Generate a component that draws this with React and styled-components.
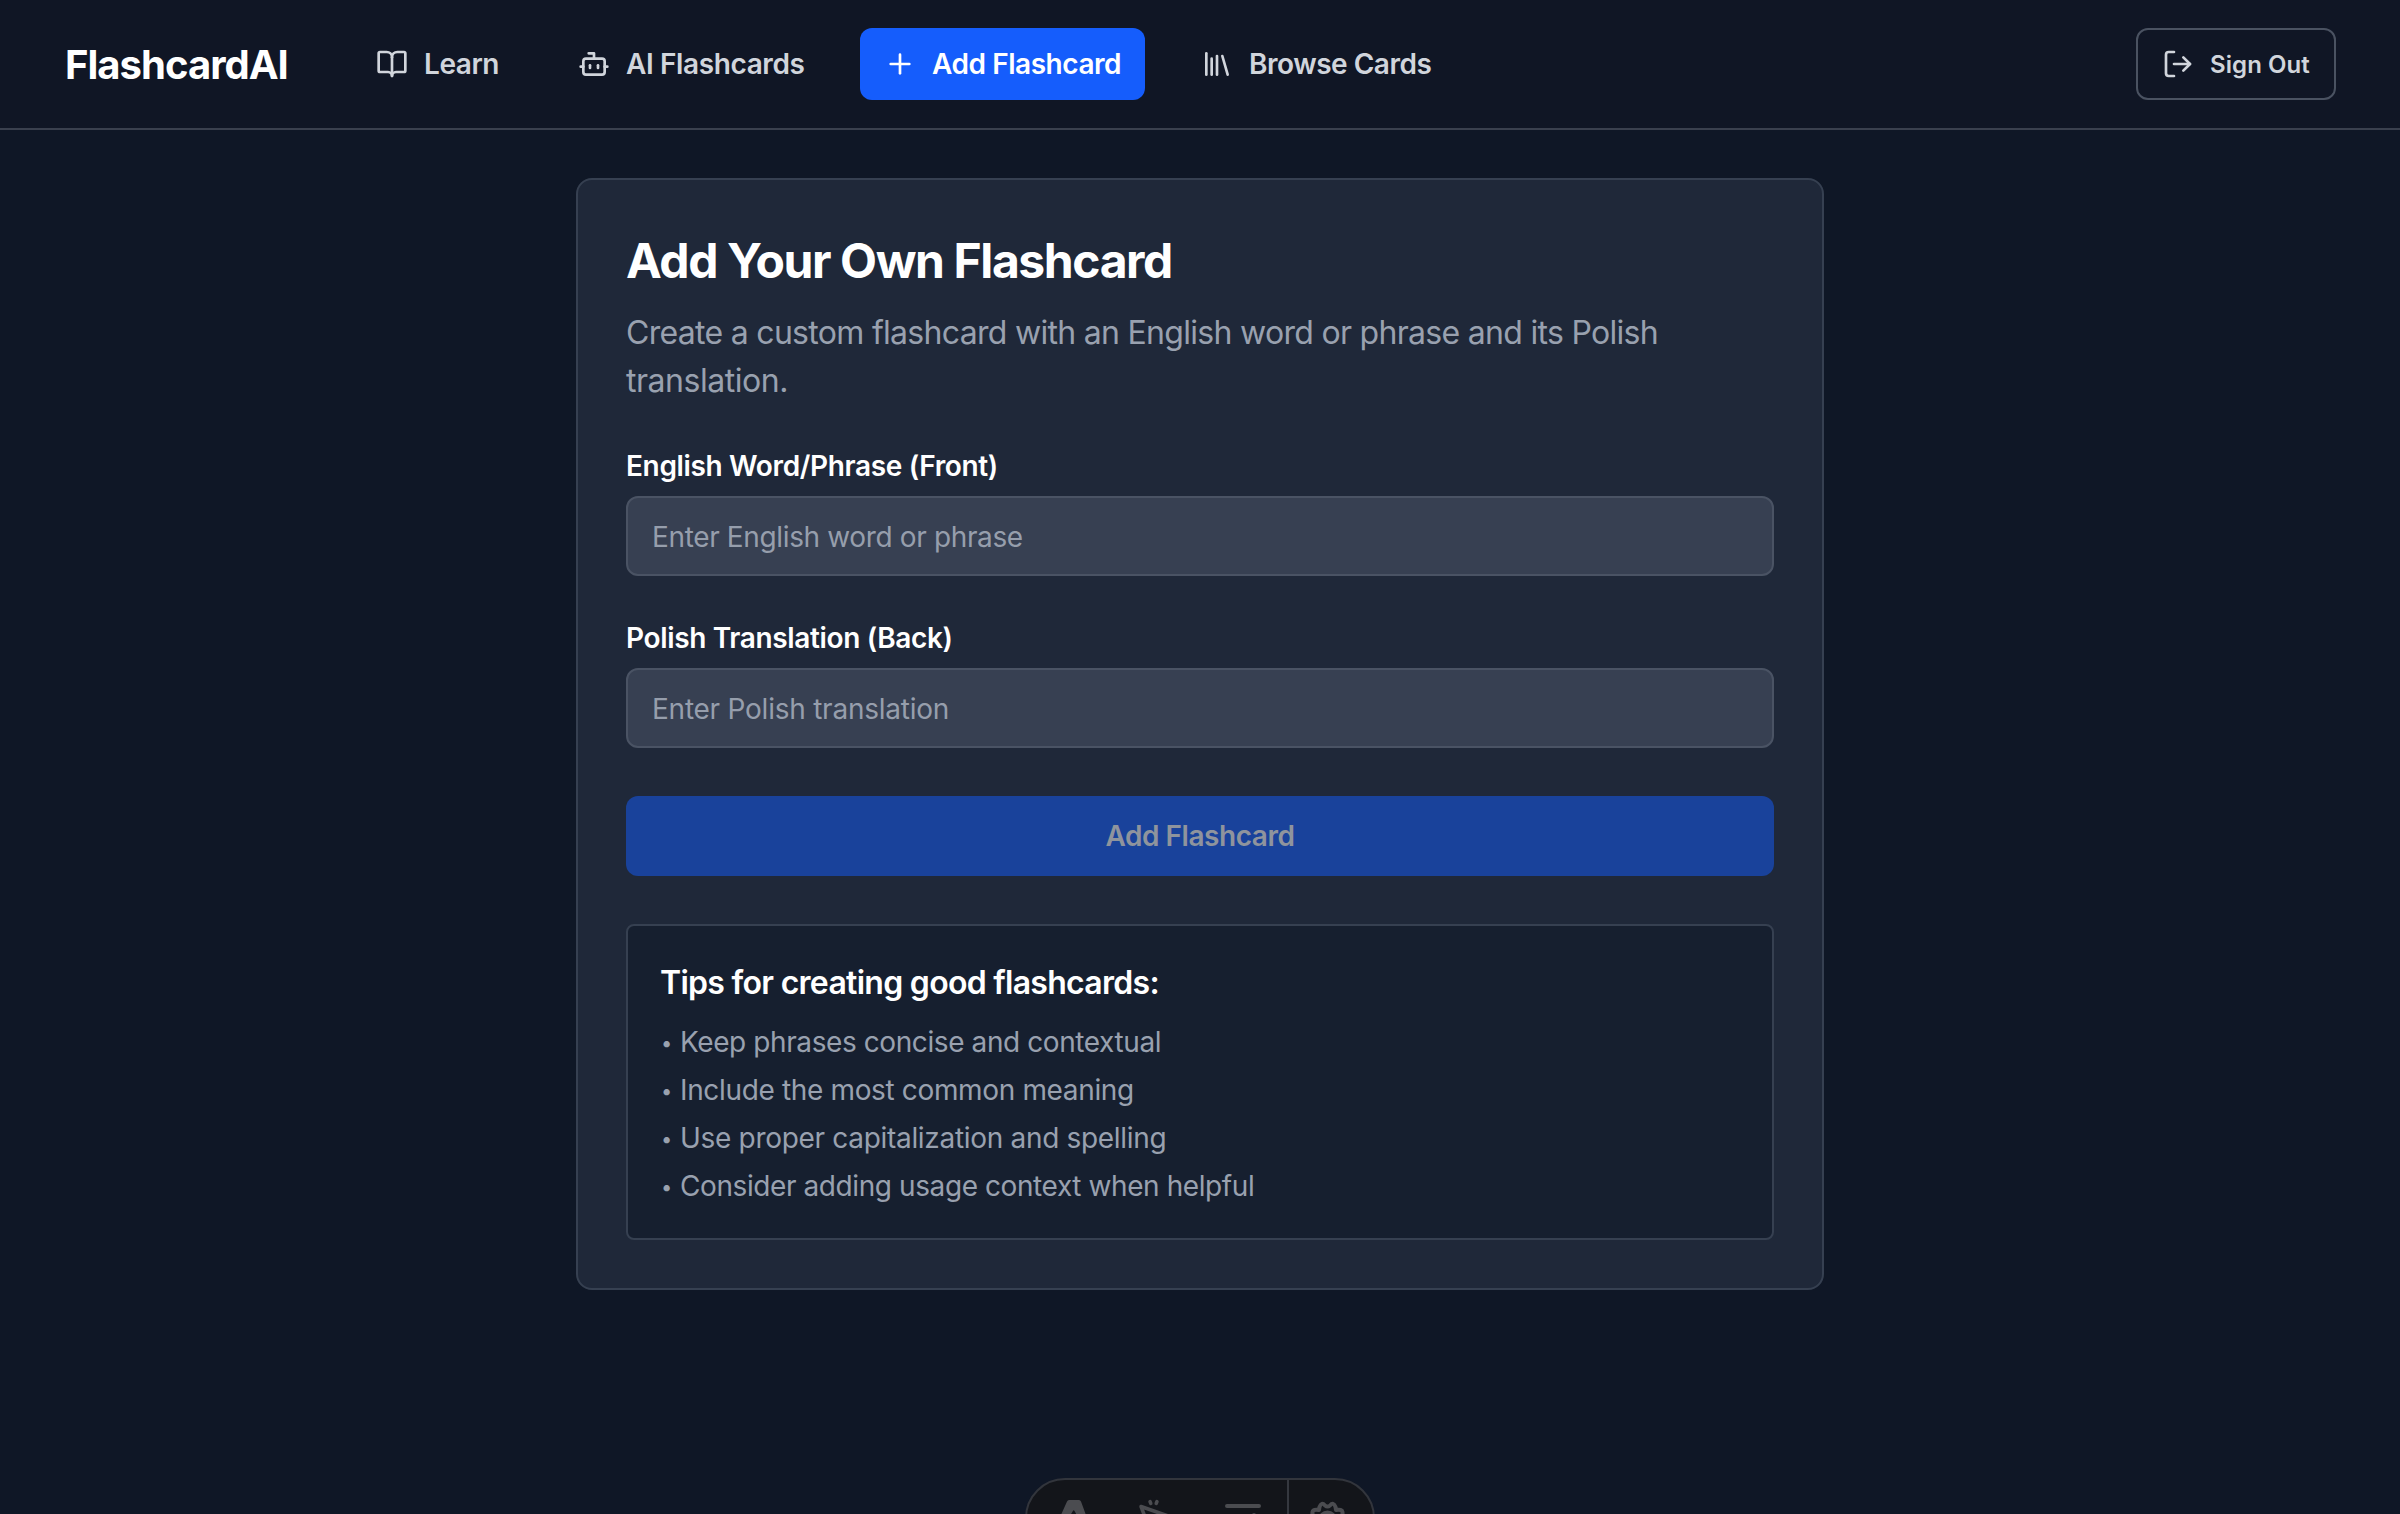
import React from "react";
import styled, { createGlobalStyle } from "styled-components";
import { BookOpen, Bot, Plus, Library, LogOut } from "lucide-react";

const GlobalStyle = createGlobalStyle`
  * { box-sizing: border-box; }
  body {
    margin: 0;
    overflow: hidden;
    background: #0f1726;
    color: #fff;
    font-family: Inter, "Liberation Sans", sans-serif;
  }
  h1, h2, p, ul { margin: 0; padding: 0; }
`;

const Page = styled.div`
  min-height: 100vh;
  display: flex;
  flex-direction: column;
`;

const Header = styled.header`
  display: flex;
  align-items: center;
  justify-content: space-between;
  height: 130px;
  padding: 0 64px;
  background: #101625;
  border-bottom: 2px solid #3a404e;
`;

const HeaderStart = styled.div`
  display: flex;
  align-items: center;
`;

const Logo = styled.div`
  width: 288px;
  padding: 1px 0 0 1px;
  font-size: 40px;
  line-height: 56px;
  font-weight: 700;
  letter-spacing: -0.98px;
  white-space: nowrap;
`;

const Nav = styled.nav`
  display: flex;
  gap: 32px;
`;

const NavLink = styled.a`
  display: flex;
  align-items: center;
  gap: 16px;
  width: ${(p) => p.$width}px;
  height: 72px;
  padding: 0 24px;
  border-radius: 12px;
  font-size: 28px;
  font-weight: 600;
  letter-spacing: ${(p) => p.$tracking}px;
  white-space: nowrap;
  color: ${(p) => (p.$active ? "#fff" : "#d1d5dc")};
  background: ${(p) => (p.$active ? "#155dfc" : "transparent")};
  svg { flex: none; }
`;

const SignOut = styled.button`
  display: flex;
  align-items: center;
  gap: 16px;
  width: 200px;
  height: 72px;
  padding: 0 24px;
  border: 2px solid #4a5261;
  border-radius: 12px;
  background: transparent;
  color: #d1d5dc;
  font: 600 24px Inter, sans-serif;
  letter-spacing: 0.08px;
  white-space: nowrap;
  svg { flex: none; }
`;

const Main = styled.main`
  display: flex;
  justify-content: center;
  padding-top: 48px;
`;

const Card = styled.section`
  width: 1248px;
  padding: 48px;
  border: 2px solid #364051;
  border-radius: 16px;
  background: #1f2839;
`;

const Title = styled.h1`
  padding-top: 1px;
  font-size: 48px;
  line-height: 63px;
  font-weight: 700;
  letter-spacing: -1.4px;
`;

const Description = styled.p`
  margin-top: 17px;
  font-size: 32px;
  line-height: 48px;
  color: #99a1af;
`;

const Line = styled.span`
  display: block;
  white-space: nowrap;
  letter-spacing: ${(p) => p.$tracking}px;
`;

const Form = styled.form`
  display: flex;
  flex-direction: column;
  gap: 48px;
  margin-top: 47px;
`;

const Field = styled.div`
  display: flex;
  flex-direction: column;
  gap: 16px;
`;

const Label = styled.label`
  font-size: 28px;
  line-height: 28px;
  font-weight: 600;
  letter-spacing: -0.35px;
`;

const Input = styled.input`
  height: 80px;
  padding: 2px 24px 0;
  border: 2px solid #4a5364;
  border-radius: 12px;
  background: #374052;
  color: #fff;
  font: 400 28px Inter, sans-serif;
  letter-spacing: ${(p) => p.$tracking}px;
  outline: none;
  &::placeholder { color: #969eac; opacity: 1; }
`;

const Submit = styled.button`
  height: 80px;
  border: 0;
  border-radius: 12px;
  background: #19429b;
  color: #8f949d;
  font: 600 28px Inter, sans-serif;
  letter-spacing: -0.46px;
`;

const Tips = styled.section`
  margin-top: 48px;
  padding: 33px 32px 32px;
  border: 2px solid #364051;
  border-radius: 8px;
  background: #161f2f;
`;

const TipsTitle = styled.h2`
  font-size: 32px;
  line-height: 48px;
  font-weight: 600;
  letter-spacing: -0.71px;
`;

const TipList = styled.ul`
  display: flex;
  flex-direction: column;
  gap: 8px;
  margin-top: 15px;
  list-style: none;
`;

const Tip = styled.li`
  display: flex;
  font-size: 28px;
  line-height: 40px;
  color: #99a1af;
  letter-spacing: ${(p) => p.$tracking}px;
`;

const Bullet = styled.span`
  width: 20px;
  padding-left: 1px;
  font-size: 20px;
  line-height: 43px;
  height: 40px;
`;

const Dock = styled.div`
  position: fixed;
  bottom: -44px;
  left: 50%;
  transform: translateX(-50%);
  display: flex;
  width: 350px;
  height: 80px;
  border: 2px solid #32353c;
  border-radius: 40px;
  background: #13151a;
  overflow: hidden;
`;

const DockItem = styled.div`
  width: ${(p) => p.$width}px;
  height: 76px;
  flex: none;
  color: #4b4c50;
  border-left: ${(p) => (p.$divided ? "2px solid #35383f" : "0")};
  svg { display: block; }
`;

const links = [
  { label: "Learn", icon: BookOpen, width: 170, tracking: -0.45 },
  { label: "AI Flashcards", icon: Bot, width: 274, tracking: -0.39 },
  { label: "Add Flashcard", icon: Plus, width: 285, tracking: -0.45 },
  { label: "Browse Cards", icon: Library, width: 278, tracking: -0.48 },
];

const activeLabel = "Add Flashcard";

const fields = [
  { id: "front", label: "English Word/Phrase (Front)", hint: "Enter English word or phrase", tracking: -0.36 },
  { id: "back", label: "Polish Translation (Back)", hint: "Enter Polish translation", tracking: -0.24 },
];

const tips = [
  ["Keep phrases concise and contextual", -0.41],
  ["Include the most common meaning", -0.35],
  ["Use proper capitalization and spelling", -0.31],
  ["Consider adding usage context when helpful", -0.41],
];

export default function App() {
  return (
    <Page>
      <GlobalStyle />
      <Header>
        <HeaderStart>
          <Logo>FlashcardAI</Logo>
          <Nav>
            {links.map(({ label, icon: Icon, width, tracking }) => (
              <NavLink key={label} $width={width} $tracking={tracking} $active={label === activeLabel}>
                <Icon size={32} />
                {label}
              </NavLink>
            ))}
          </Nav>
        </HeaderStart>
        <SignOut>
          <LogOut size={32} />
          Sign Out
        </SignOut>
      </Header>
      <Main>
        <Card>
          <Title>Add Your Own Flashcard</Title>
          <Description>
            <Line $tracking={-0.7}>Create a custom flashcard with an English word or phrase and its Polish</Line>
            <Line $tracking={-0.46}>translation.</Line>
          </Description>
          <Form>
            {fields.map((f) => (
              <Field key={f.id}>
                <Label htmlFor={f.id}>{f.label}</Label>
                <Input id={f.id} placeholder={f.hint} $tracking={f.tracking} />
              </Field>
            ))}
            <Submit type="button">Add Flashcard</Submit>
          </Form>
          <Tips>
            <TipsTitle>Tips for creating good flashcards:</TipsTitle>
            <TipList>
              {tips.map(([text, tracking]) => (
                <Tip key={text} $tracking={tracking}>
                  <Bullet>•</Bullet>
                  {text}
                </Tip>
              ))}
            </TipList>
          </Tips>
        </Card>
      </Main>
      <Dock>
        <DockItem $width={88}>
          <svg width="88" height="76" fill="currentColor">
            <path d="M29 46 40 21.500q.6-1.500 2-1.500h10q1.400 0 2 1.500L63 46q-5-3-9-3.500L47.500 31q-.8-1.500-1.600 0L39 42.500Q34 43 29 46Z" />
          </svg>
        </DockItem>
        <DockItem $width={86}>
          <svg width="86" height="76" fill="none" stroke="currentColor" strokeWidth="3.500" strokeLinecap="round" strokeLinejoin="round">
            <path d="M26 26.500 56 37 43 42 37 55Z" />
            <path d="m35 21.500.8 2M42 21.500l-.8 2" />
          </svg>
        </DockItem>
        <DockItem $width={86}>
          <svg width="86" height="76" fill="none" stroke="currentColor" strokeWidth="4" strokeLinecap="round" strokeLinejoin="round">
            <path d="M26 26h32M26 38h14M26 50h10M44 44l9-9 6 6" />
          </svg>
        </DockItem>
        <DockItem $width={86} $divided>
          <svg width="84" height="76" fill="none" stroke="currentColor" strokeWidth="4" strokeLinejoin="round">
            <path d="M36 25.500Q32.500 21.500 30.500 27L30 30Q24 29 23.500 32T25 37Q20 40 25 43.500 22 51 30 50 30 58 36 54.500q2.500 3 5 0Q47 58 47 50q8 1 5-6.500 5-3.500 0-6.500 2-2 1.500-5T47 30l-.5-3Q44.500 21.500 41 25.500q-2.500 2-5 0Z" />
            <circle cx="38.500" cy="40" r="7.500" />
          </svg>
        </DockItem>
      </Dock>
    </Page>
  );
}
